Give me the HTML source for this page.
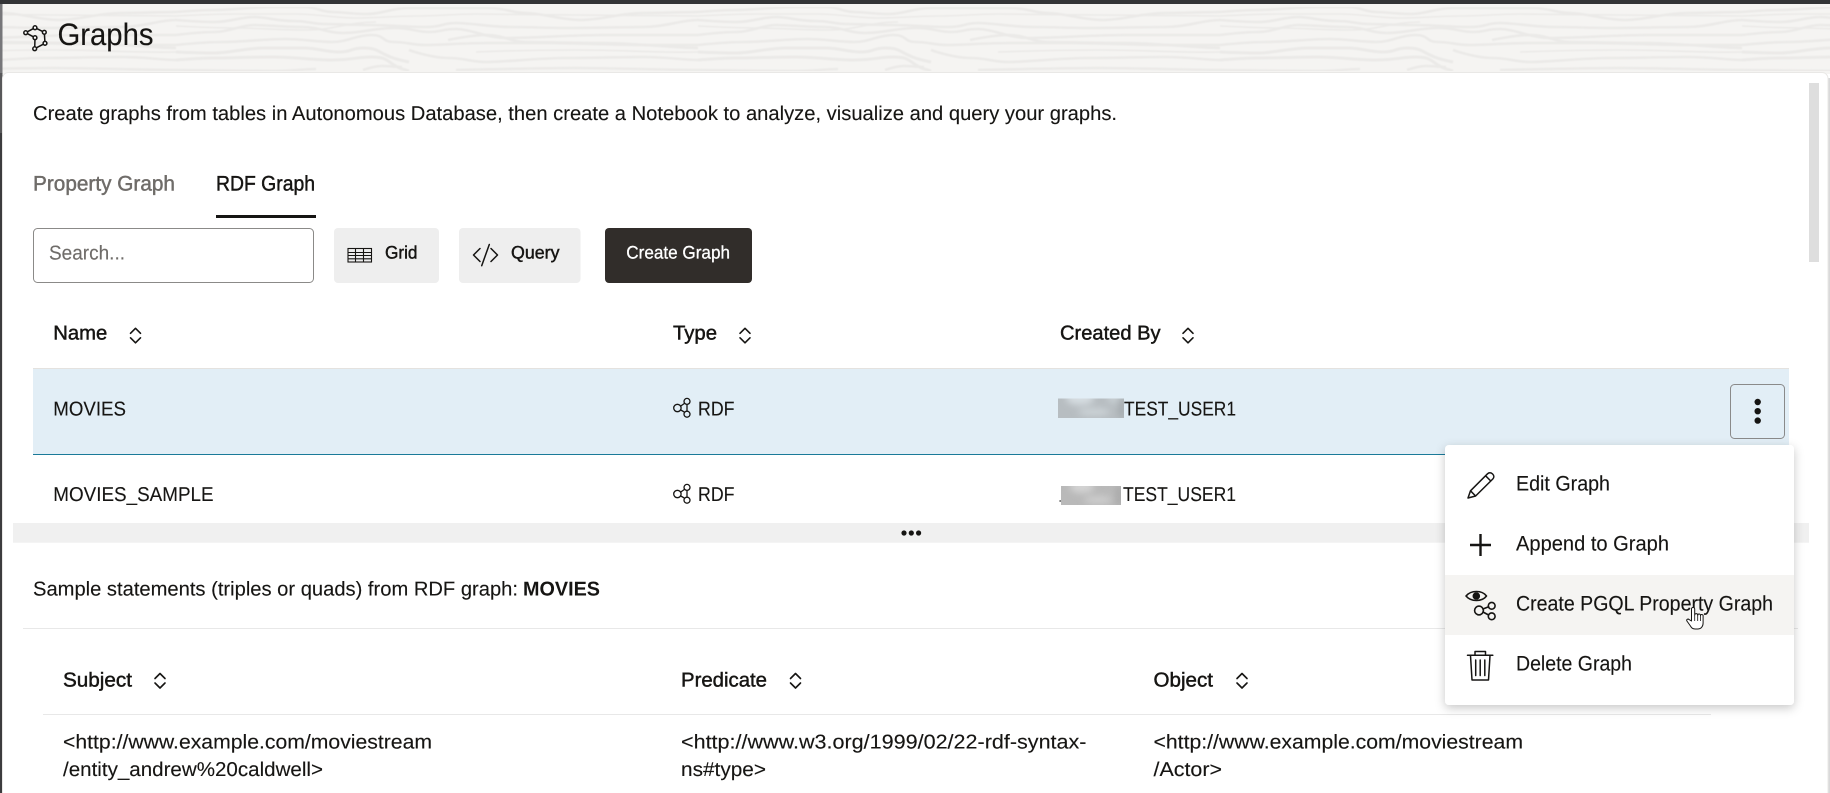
<!DOCTYPE html>
<html lang="en">
<head>
<meta charset="utf-8">
<title>Graphs</title>
<style>
html,body{margin:0;padding:0;background:#fff;width:1830px;height:793px;overflow:hidden}
svg{display:block}
text{font-family:"Liberation Sans",sans-serif;fill:#161513;font-size:20px;stroke:#161513;stroke-width:.12;text-rendering:geometricPrecision}
.m{stroke:#161513;stroke-width:.45}
.w path{fill:none;stroke:#ebeae8;stroke-width:2.6}
.s{fill:none;stroke:#161513;stroke-width:1.6;stroke-linecap:round;stroke-linejoin:round}
.i{fill:none;stroke:#161513;stroke-width:1.5;stroke-linecap:round;stroke-linejoin:round}
</style>
</head>
<body>
<svg width="1830" height="793" viewBox="0 0 1830 793" xmlns="http://www.w3.org/2000/svg">
<defs>
<g id="tile" class="w">
<path d="M0 12S25 10 39 10S80 7 97 7S115 7 128 7S145 12 156 12S175 14 191 14S215 8 233 8S290 8 311 8S335 13 350 13S385 20 405 20S445 13 467 13S505 12 522 12"/>
<path d="M0 20S25 22 39 22S65 17 78 17S100 21 117 21S135 24 148 24S175 25 195 25S230 27 249 27S265 23 280 23S315 27 335 27S370 28 389 28S445 27 467 27S505 20 522 20"/>
<path d="M0 35S25 32 39 32S65 25 78 25S105 27 125 27S150 33 167 33S200 28 218 28S240 32 253 32S265 29 280 29S310 38 331 38S400 35 428 35S500 35 522 35"/>
<path d="M0 45S30 42 47 42S90 39 109 39S140 42 156 42S180 35 195 35S205 42 218 42S235 45 249 45S290 43 311 43S350 43 370 43S440 45 467 45S505 45 522 45"/>
<path d="M0 52S25 53 39 53S70 48 89 48S115 48 128 48S150 52 163 52S175 48 187 48S200 50 210 55S225 60 233 62" style="stroke-width:3"/>
<path d="M0 60S25 58 39 58S75 57 97 57S135 60 156 60S180 57 195 57S210 60 218 65S228 69 233 71" style="stroke-width:3"/>
<path d="M233 50S255 58 272 58S295 62 311 62S365 58 389 58S440 57 467 57S505 60 522 60"/>
<path d="M0 70S70 71 97 71S125 69 140 69"/>
<path d="M187 70S198 66 206 66S218 67 226 67"/>
<path d="M272 40S295 35 311 35S335 42 350 42S400 43 428 43S500 48 522 48"/>
<path d="M280 70S370 68 400 68S500 70 522 70"/>
<path d="M0 16S40 14 60 14S100 14 120 14S160 18 180 18S220 16 240 16S280 14 300 14S370 15 400 15S500 16 522 16" style="stroke-width:1.6"/>
<path d="M0 26S40 28 60 28S100 30 130 30S170 22 200 22" style="stroke-width:1.6"/>
<path d="M300 52S350 50 400 50S480 53 522 52" style="stroke-width:1.6"/>
</g>
<g id="sort"><path class="s" d="M.5 5L5.5 0L10.5 5"/><path class="s" d="M.5 9.5L5.5 14.5L10.5 9.5"/></g>
<g id="rdf" class="i" style="stroke-width:1.3">
<circle cx="677.4" cy="0" r="3.7"/><circle cx="687" cy="-6.6" r="3"/><circle cx="687" cy="6.2" r="3"/>
<path d="M680.8-2L684.5-4.6M680.8 2L684.6 4.2M687-3.4V3"/>
</g>
<filter id="b3" x="-30%" y="-30%" width="160%" height="160%"><feGaussianBlur stdDeviation="3.5"/></filter>
<filter id="wb" x="0" y="0" width="100%" height="100%"><feGaussianBlur stdDeviation=".5"/></filter>
<clipPath id="c1"><rect x="1058" y="398.5" width="66" height="19.5"/></clipPath>
<clipPath id="c2"><rect x="1061" y="486" width="60" height="19"/></clipPath>
<filter id="sh" x="-10%" y="-10%" width="120%" height="125%"><feDropShadow dx="0" dy="3" stdDeviation="5" flood-color="#000" flood-opacity=".22"/></filter>
</defs>

<!-- outer / header -->
<rect width="1830" height="793" fill="#fff"/>
<rect y="4" width="1830" height="70" fill="#f5f4f2"/>
<g filter="url(#wb)">
<use href="#tile" x="-346"/><use href="#tile" x="176"/><use href="#tile" x="698"/><use href="#tile" x="1220"/><use href="#tile" x="1742"/>
</g>
<rect width="1830" height="4" fill="#333436"/>
<rect y="4" width="2.5" height="69" fill="#77777a"/>
<rect y="73" width="2.5" height="60" fill="#58585a"/>
<rect y="133" width="2.5" height="660" fill="#3c3c3e"/>

<!-- panel -->
<rect x="2.5" y="72.5" width="1825.5" height="730" rx="6" fill="#fff" stroke="#e9e8e6"/>
<rect x="1828.5" y="78" width="1.5" height="715" fill="#d9d9d9"/>
<rect x="1809" y="83" width="10" height="179" fill="#dedede"/>

<!-- logo -->
<g class="i" style="stroke-width:1.5">
<path d="M25.7 32.7L35 27.7L44.3 32.3L45 43.3L34.7 48.7L35 37.7Z"/>
<g fill="#fff"><circle cx="25.7" cy="32.7" r="1.9"/><circle cx="35" cy="27.7" r="1.9"/><circle cx="44.3" cy="32.3" r="1.9"/><circle cx="45" cy="43.3" r="1.9"/><circle cx="34.7" cy="48.7" r="1.9"/><circle cx="35" cy="37.7" r="1.9"/></g>
</g>
<text x="57.5" y="45" style="font-size:31px" textLength="96" lengthAdjust="spacingAndGlyphs">Graphs</text>

<text x="33" y="120" textLength="1084" lengthAdjust="spacingAndGlyphs">Create graphs from tables in Autonomous Database, then create a Notebook to analyze, visualize and query your graphs.</text>

<!-- tabs -->
<text x="33" y="190.5" class="m" style="font-size:21px;fill:#6f6c69;stroke:#6f6c69" textLength="142" lengthAdjust="spacingAndGlyphs">Property Graph</text>
<text x="216" y="190.5" class="m" style="font-size:21px" textLength="99" lengthAdjust="spacingAndGlyphs">RDF Graph</text>
<rect x="216" y="215" width="100" height="3" fill="#161513"/>

<!-- toolbar -->
<rect x="33.5" y="228.5" width="280" height="54" rx="4" fill="#fff" stroke="#8b8a88"/>
<text x="49" y="259.5" style="fill:#6f6c69;stroke:#6f6c69" textLength="76" lengthAdjust="spacingAndGlyphs">Search...</text>
<rect x="334" y="228" width="105" height="55" rx="4" fill="#eeeeee"/>
<g fill="none" stroke="#161513" stroke-width="1.1"><rect x="348" y="248.5" width="23.5" height="13.5"/><path d="M348 252.5H371.5M348 255.5H371.5M348 258.8H371.5M355.5 249V262M363.5 249V262"/></g>
<text x="385" y="258.5" class="m" style="font-size:18px" textLength="32.5" lengthAdjust="spacingAndGlyphs">Grid</text>
<rect x="459" y="228" width="121.5" height="55" rx="4" fill="#eeeeee"/>
<path class="i" d="M480 248.5L473.5 255L480 261.5M491 248.5L497.5 255L491 261.5M489.3 244.5L481.7 265.7"/>
<text x="511" y="258.5" class="m" style="font-size:18px" textLength="48.5" lengthAdjust="spacingAndGlyphs">Query</text>
<rect x="605" y="228" width="147" height="55" rx="4" fill="#312d2a"/>
<text x="626.3" y="258.5" class="m" style="font-size:18px;fill:#fff;stroke:#fff;stroke-width:.3" textLength="103.7" lengthAdjust="spacingAndGlyphs">Create Graph</text>

<!-- table 1 header -->
<text x="53.3" y="339.5" class="m" textLength="54" lengthAdjust="spacingAndGlyphs">Name</text>
<use href="#sort" x="130" y="328.3"/>
<text x="673" y="339.5" class="m" textLength="44" lengthAdjust="spacingAndGlyphs">Type</text>
<use href="#sort" x="739.5" y="328.3"/>
<text x="1060" y="339.5" class="m" textLength="100.6" lengthAdjust="spacingAndGlyphs">Created By</text>
<use href="#sort" x="1182.5" y="328.3"/>

<!-- rows -->
<rect x="33" y="368" width="1756" height="86" fill="#e2eef6"/>
<rect x="33" y="368" width="1756" height="1" fill="#e4e2df"/>
<rect x="33" y="454" width="1412" height="1" fill="#1a7a99"/>
<text x="53.3" y="415.5" textLength="72.7" lengthAdjust="spacingAndGlyphs">MOVIES</text>
<use href="#rdf" y="408"/>
<text x="698" y="415.5" textLength="36.5" lengthAdjust="spacingAndGlyphs">RDF</text>
<g clip-path="url(#c1)">
<rect x="1058" y="398.5" width="66" height="19.5" fill="#b7bdc1"/>
<g filter="url(#b3)"><ellipse cx="1080" cy="398" rx="14" ry="7" fill="#d6dde1"/><ellipse cx="1094" cy="412" rx="16" ry="4" fill="#ccd3d7"/><ellipse cx="1114" cy="398" rx="7" ry="5" fill="#c9d0d4"/><rect x="1119" y="398" width="6" height="20" fill="#a2a8ac"/></g>
</g>
<text x="1124" y="415.5" textLength="112" lengthAdjust="spacingAndGlyphs">TEST_USER1</text>

<text x="53.3" y="501.2" textLength="160.3" lengthAdjust="spacingAndGlyphs">MOVIES_SAMPLE</text>
<use href="#rdf" y="494"/>
<text x="698" y="501.2" textLength="36.5" lengthAdjust="spacingAndGlyphs">RDF</text>
<g clip-path="url(#c2)">
<rect x="1061" y="486" width="60" height="19" fill="#b9b9b9"/>
<g filter="url(#b3)"><ellipse cx="1082" cy="487" rx="12" ry="6" fill="#d4d4d4"/><ellipse cx="1098" cy="500" rx="14" ry="4" fill="#cecece"/><rect x="1116" y="486" width="6" height="19" fill="#a7a7a7"/></g>
</g>
<rect x="1059.5" y="500" width="1.3" height="2" fill="#666"/>
<text x="1123" y="501.2" textLength="113" lengthAdjust="spacingAndGlyphs">TEST_USER1</text>

<!-- splitter -->
<rect x="13" y="523" width="1796" height="19.7" fill="#f0f0f0"/>
<g fill="#161513"><circle cx="904" cy="533" r="2.6"/><circle cx="911.3" cy="533" r="2.6"/><circle cx="918.6" cy="533" r="2.6"/></g>

<!-- sample section -->
<text x="33" y="595.7" textLength="485" lengthAdjust="spacingAndGlyphs">Sample statements (triples or quads) from RDF graph:</text>
<text x="523" y="595.7" style="font-weight:bold;stroke-width:0" textLength="77" lengthAdjust="spacingAndGlyphs">MOVIES</text>
<rect x="23" y="628" width="1775" height="1" fill="#e8e8e8"/>

<text x="63" y="686.7" class="m" textLength="69" lengthAdjust="spacingAndGlyphs">Subject</text>
<use href="#sort" x="154.5" y="673.5"/>
<text x="681" y="686.7" class="m" textLength="86" lengthAdjust="spacingAndGlyphs">Predicate</text>
<use href="#sort" x="790" y="673.5"/>
<text x="1153.5" y="686.7" class="m" textLength="59.5" lengthAdjust="spacingAndGlyphs">Object</text>
<use href="#sort" x="1236.5" y="673.5"/>
<rect x="43" y="714" width="1668" height="1" fill="#e8e8e8"/>

<text x="63" y="748.5" textLength="369" lengthAdjust="spacingAndGlyphs">&lt;http://www.example.com/moviestream</text>
<text x="63" y="775.8" textLength="260" lengthAdjust="spacingAndGlyphs">/entity_andrew%20caldwell&gt;</text>
<text x="681" y="748.5" textLength="405.5" lengthAdjust="spacingAndGlyphs">&lt;http://www.w3.org/1999/02/22-rdf-syntax-</text>
<text x="681" y="775.8" textLength="85" lengthAdjust="spacingAndGlyphs">ns#type&gt;</text>
<text x="1153.5" y="748.5" textLength="369.5" lengthAdjust="spacingAndGlyphs">&lt;http://www.example.com/moviestream</text>
<text x="1153.5" y="775.8" textLength="68.5" lengthAdjust="spacingAndGlyphs">/Actor&gt;</text>

<!-- kebab -->
<rect x="1730.5" y="384.5" width="54" height="54" rx="4" fill="#e2eef6" stroke="#8a8a8a"/>
<g fill="#161513"><circle cx="1757.7" cy="402" r="3.2"/><circle cx="1757.7" cy="411.2" r="3.2"/><circle cx="1757.7" cy="420.6" r="3.2"/></g>

<!-- menu -->
<rect x="1445" y="445" width="349" height="260" rx="4" fill="#fff" filter="url(#sh)"/>
<rect x="1445" y="575" width="349" height="60" fill="#f5f4f2"/>
<text x="1516" y="490.5" style="font-size:21px" textLength="94" lengthAdjust="spacingAndGlyphs">Edit Graph</text>
<text x="1516" y="550.5" style="font-size:21px" textLength="153" lengthAdjust="spacingAndGlyphs">Append to Graph</text>
<text x="1516" y="610.5" style="font-size:21px" textLength="257" lengthAdjust="spacingAndGlyphs">Create PGQL Property Graph</text>
<text x="1516" y="670.5" style="font-size:21px" textLength="116" lengthAdjust="spacingAndGlyphs">Delete Graph</text>
<!-- pencil -->
<path class="i" d="M1468 498L1470.5 490.8L1487.5 473.8C1489 472.4 1491 472.4 1492.6 474C1494.2 475.6 1494.2 477.6 1492.8 479L1475.6 496ZM1470.5 490.8L1475.6 496M1485.6 475.8L1490.8 481"/>
<!-- plus -->
<path d="M1480.5 534V556M1470 545H1491" fill="none" stroke="#161513" stroke-width="2.4"/>
<!-- eye graph -->
<g class="i" style="stroke-width:1.6">
<path d="M1466 596C1471 590 1482 590 1486.5 596C1482 602 1471 602 1466 596Z"/>
<circle cx="1476.3" cy="596" r="3" fill="#161513"/>
<circle cx="1479" cy="610.5" r="4.4"/><circle cx="1491.7" cy="605.8" r="3.4"/><circle cx="1491.7" cy="616.3" r="3.4"/>
<path d="M1483 609L1488.6 606.8M1483 612L1488.6 615"/>
</g>
<!-- trash -->
<path class="i" d="M1467.5 655.2H1492.8M1475 655V651.5H1485.5V655M1470.5 655.5L1472 680H1488.5L1490 655.5M1475.7 660V675.5M1480.2 660V675.5M1484.8 660V675.5"/>
<!-- hand cursor -->
<g transform="translate(0,-1)">
<path d="M1691.5 622V610a1.6 1.6 0 0 1 3.2 0V616a1.5 1.5 0 0 1 3 .3a1.4 1.4 0 0 1 2.8.3a1.3 1.3 0 0 1 2.6.5V624c0 3.5-2 6-5.5 6h-2.5c-2.5 0-3.5-1-5-3.5l-3.2-4.5c-.8-1.4 1-2.6 2.2-1.4z" fill="#fff" stroke="#161513" stroke-width="1" stroke-linejoin="round"/>
<path d="M1694.7 616V622M1697.7 616.3V622M1700.5 616.6V622" fill="none" stroke="#161513" stroke-width=".8"/>
</g>
</svg>
</body>
</html>
